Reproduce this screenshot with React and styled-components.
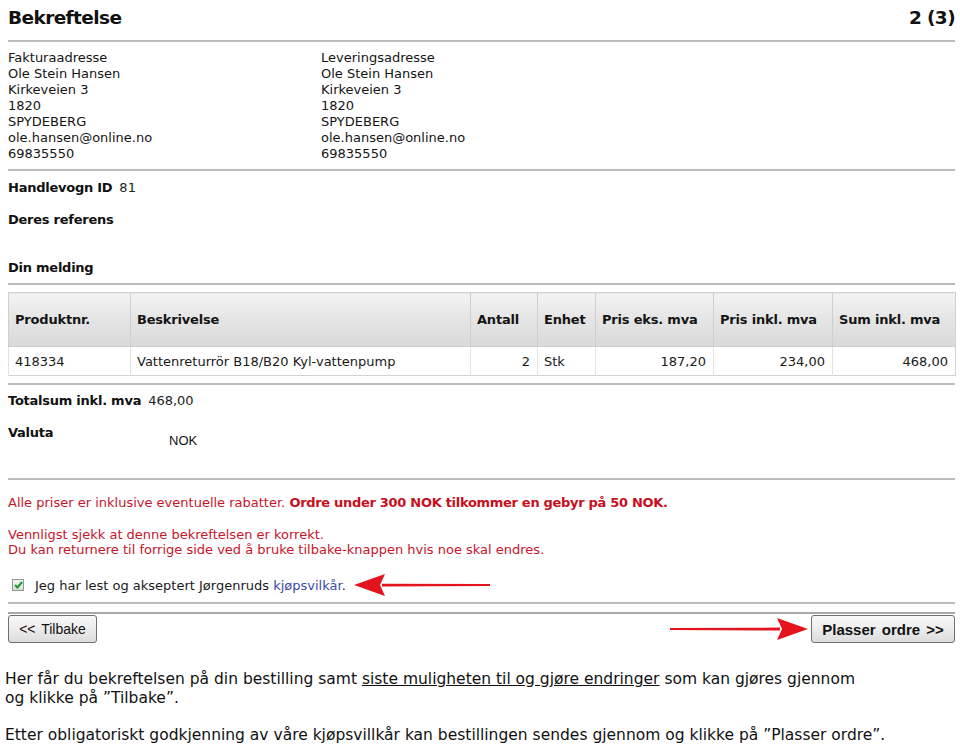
import React from 'react';
import styled, { createGlobalStyle } from 'styled-components';

const Global = createGlobalStyle`
  html, body { margin: 0; padding: 0; background: #fff; }
  body { font-family: "DejaVu Sans", Verdana, sans-serif; color: #141414; }
`;

const Page = styled.div`
  width: 960px;
  height: 744px;
  overflow: hidden;
  background: #fff;
`;

const Panel = styled.div`
  padding: 0 5px 0 8px;
`;

const Header = styled.div`
  display: flex;
  justify-content: space-between;
  height: 40px;
  padding-top: 6px;
  box-sizing: border-box;
  font-size: 18.5px;
  line-height: 23px;
  font-weight: bold;
  letter-spacing: -0.6px;
  color: #111;
`;

const Rule = styled.div`
  height: 2px;
  background: ${p => p.$dark ? '#a8a8a8' : '#bcbcbc'};
  margin-top: ${p => p.$mt || 0}px;
`;

const Addresses = styled.div`
  display: grid;
  grid-template-columns: 313px 1fr;
  padding: 8px 0 7px;
  font-size: 13px;
  line-height: 16px;
`;

const Lines = styled.div`
  display: flex;
  flex-direction: column;
`;

const InfoBlock = styled.div`
  padding-top: ${p => p.$pt || 0}px;
  padding-bottom: ${p => p.$pb || 0}px;
  display: flex;
  flex-direction: column;
`;

const InfoRow = styled.div`
  display: flex;
  align-items: flex-start;
  gap: ${p => p.$gap ?? 7}px;
  font-size: 13px;
  line-height: 16px;
  margin-top: ${p => p.$mt || 0}px;
`;

const Label = styled.span`
  font-weight: bold;
  letter-spacing: -0.25px;
  color: #111;
  width: ${p => p.$w ? p.$w + 'px' : 'auto'};
  flex: none;
`;

const Value = styled.span`
  color: #222;
`;

const PlainValue = styled.span`
  font-family: "Liberation Sans", Arial, sans-serif;
  font-size: 13px;
  padding-top: 8px;
  color: #111;
`;

const Table = styled.table`
  width: 947px;
  border-collapse: collapse;
  margin-top: 7px;
  font-size: 13px;
  table-layout: fixed;
  border: 1px solid #d2d2d2;
`;

const Th = styled.th`
  height: 53px;
  padding: 0 6px;
  text-align: left;
  font-weight: bold;
  letter-spacing: -0.2px;
  color: #151515;
  background: linear-gradient(#f3f3f3 0%, #e6e6e6 45%, #d9d9d9 100%);
  border-left: 1px solid #cfcfcf;
  border-bottom: 1px solid #cdcdcd;
  white-space: nowrap;
`;

const Td = styled.td`
  height: 28px;
  padding: 0 ${p => p.$right ? '7px' : '6px'};
  text-align: ${p => p.$right ? 'right' : 'left'};
  border-left: 1px solid #e2e2e2;
  color: #1a1a1a;
  white-space: nowrap;
`;

const Messages = styled.div`
  padding-top: 15px;
  color: #c8142a;
  font-size: 13px;
`;

const Line = styled.div`
  line-height: ${p => p.$lh || 16}px;
`;

const Strong = styled.b`
  color: #c80f22;
  letter-spacing: -0.3px;
`;

const Para = styled.div`
  margin-top: ${p => p.$mt || 0}px;
`;

const CheckRow = styled.div`
  display: flex;
  align-items: center;
  height: 18px;
  margin-top: 19px;
  padding-left: 4px;
  font-size: 13px;
  color: #1a1a1a;
`;

const Box = styled.span`
  width: 12px;
  height: 12px;
  box-sizing: border-box;
  border: 1px solid #8a9a8a;
  background: linear-gradient(#f4f4f4, #dcdcdc);
  display: inline-flex;
  align-items: center;
  justify-content: center;
  margin-right: 11px;
`;

const Link = styled.a`
  color: #3b4aa6;
  text-decoration: none;
`;

const ArrowWrap = styled.span`
  display: inline-flex;
  margin-left: ${p => p.$ml || 0}px;
  margin-right: ${p => p.$mr || 0}px;
`;

const ButtonRow = styled.div`
  display: flex;
  align-items: center;
  justify-content: space-between;
  margin-top: 1px;
`;

const RightGroup = styled.div`
  display: flex;
  align-items: center;
`;

const Button = styled.button`
  height: 28px;
  width: ${p => p.$w}px;
  box-sizing: border-box;
  border: 1px solid #6f6f6f;
  border-radius: 3px;
  background: linear-gradient(#f8f8f8 0%, #ececec 50%, #dcdcdc 100%);
  font-family: "Liberation Sans", Arial, sans-serif;
  font-size: ${p => p.$bold ? 15 : 14}px;
  font-weight: ${p => p.$bold ? 'bold' : 'normal'};
  color: #111;
  padding: 0;
  word-spacing: 2px;
`;

const Notes = styled.div`
  padding: 27px 0 0 5px;
  font-size: 15.5px;
  line-height: 19px;
  color: #111;
`;

const U = styled.span`
  text-decoration: underline;
`;

const Arrow = ({ dir, len }) => {
  const h = 24;
  const c = h / 2;
  if (dir === 'left') {
    return (
      <svg width={len} height={h} viewBox={`0 0 ${len} ${h}`}>
        <path d={`M28 ${c - 1.3} L${len} ${c - 1} L${len} ${c + 1} L28 ${c + 1.5} Z`} fill="#e3141d" />
        <path d={`M0 ${c} L31 1 L26 ${c} L31 ${h - 1} Z`} fill="#e3141d" />
      </svg>
    );
  }
  return (
    <svg width={len} height={h} viewBox={`0 0 ${len} ${h}`}>
      <path d={`M0 ${c - 1} L${len - 28} ${c - 1.4} L${len - 28} ${c + 1.5} L0 ${c + 1} Z`} fill="#e3141d" />
      <path d={`M${len} ${c} L${len - 31} 1 L${len - 26} ${c} L${len - 31} ${h - 1} Z`} fill="#e3141d" />
    </svg>
  );
};

const Check = () => (
  <svg width="9" height="8" viewBox="0 0 9 8">
    <path d="M1 4 L3.5 6.5 L8 1" fill="none" stroke="#1f9a2c" strokeWidth="2" />
  </svg>
);

const address = ['Ole Stein Hansen', 'Kirkeveien 3', '1820', 'SPYDEBERG', 'ole.hansen@online.no', '69835550'];

export default function App() {
  return (
    <Page>
      <Global />
      <Panel>
        <Header>
          <span>Bekreftelse</span>
          <span>2 (3)</span>
        </Header>
        <Rule />
        <Addresses>
          <Lines>
            <span>Fakturaadresse</span>
            {address.map(l => <span key={l}>{l}</span>)}
          </Lines>
          <Lines>
            <span>Leveringsadresse</span>
            {address.map(l => <span key={l}>{l}</span>)}
          </Lines>
        </Addresses>
        <Rule />
        <InfoBlock $pt={9} $pb={7}>
          <InfoRow><Label>Handlevogn ID</Label><Value>81</Value></InfoRow>
          <InfoRow $mt={16}><Label>Deres referens</Label></InfoRow>
          <InfoRow $mt={32}><Label>Din melding</Label></InfoRow>
        </InfoBlock>
        <Rule />
        <Table>
          <colgroup>
            <col style={{ width: 122 }} />
            <col style={{ width: 340 }} />
            <col style={{ width: 67 }} />
            <col style={{ width: 58 }} />
            <col style={{ width: 118 }} />
            <col style={{ width: 119 }} />
            <col style={{ width: 123 }} />
          </colgroup>
          <thead>
            <tr>
              <Th>Produktnr.</Th>
              <Th>Beskrivelse</Th>
              <Th>Antall</Th>
              <Th>Enhet</Th>
              <Th>Pris eks. mva</Th>
              <Th>Pris inkl. mva</Th>
              <Th>Sum inkl. mva</Th>
            </tr>
          </thead>
          <tbody>
            <tr>
              <Td>418334</Td>
              <Td>Vattenreturrör B18/B20 Kyl-vattenpump</Td>
              <Td $right>2</Td>
              <Td>Stk</Td>
              <Td $right>187,20</Td>
              <Td $right>234,00</Td>
              <Td $right>468,00</Td>
            </tr>
          </tbody>
        </Table>
        <Rule $mt={7} />
        <InfoBlock $pt={8} $pb={29}>
          <InfoRow><Label>Totalsum inkl. mva</Label><Value>468,00</Value></InfoRow>
          <InfoRow $mt={16} $gap={0}>
            <Label $w={161}>Valuta</Label>
            <PlainValue>NOK</PlainValue>
          </InfoRow>
        </InfoBlock>
        <Rule />
        <Messages>
          <Line>
            Alle priser er inklusive eventuelle rabatter. <Strong>Ordre under 300 NOK tilkommer en gebyr på 50 NOK.</Strong>
          </Line>
          <Para $mt={16}>
            <Line $lh={15}>Vennligst sjekk at denne bekreftelsen er korrekt.</Line>
            <Line $lh={15}>Du kan returnere til forrige side ved å bruke tilbake-knappen hvis noe skal endres.</Line>
          </Para>
        </Messages>
        <CheckRow>
          <Box><Check /></Box>
          <span>Jeg har lest og akseptert Jørgenruds <Link>kjøpsvilkår</Link>.</span>
          <ArrowWrap $ml={8}><Arrow dir="left" len={136} /></ArrowWrap>
        </CheckRow>
        <Rule $mt={8} />
        <Rule $mt={8} $dark />
        <ButtonRow>
          <Button $w={89}>&lt;&lt; Tilbake</Button>
          <RightGroup>
            <ArrowWrap $mr={3}><Arrow dir="right" len={138} /></ArrowWrap>
            <Button $w={144} $bold>Plasser ordre &gt;&gt;</Button>
          </RightGroup>
        </ButtonRow>
      </Panel>
      <Notes>
        Her får du bekreftelsen på din bestilling samt <U>siste muligheten til og gjøre endringer</U> som kan gjøres gjennom
        <br />
        og klikke på ”Tilbake”.
        <Para $mt={18}>Etter obligatoriskt godkjenning av våre kjøpsvillkår kan bestillingen sendes gjennom og klikke på ”Plasser ordre”.</Para>
      </Notes>
    </Page>
  );
}
